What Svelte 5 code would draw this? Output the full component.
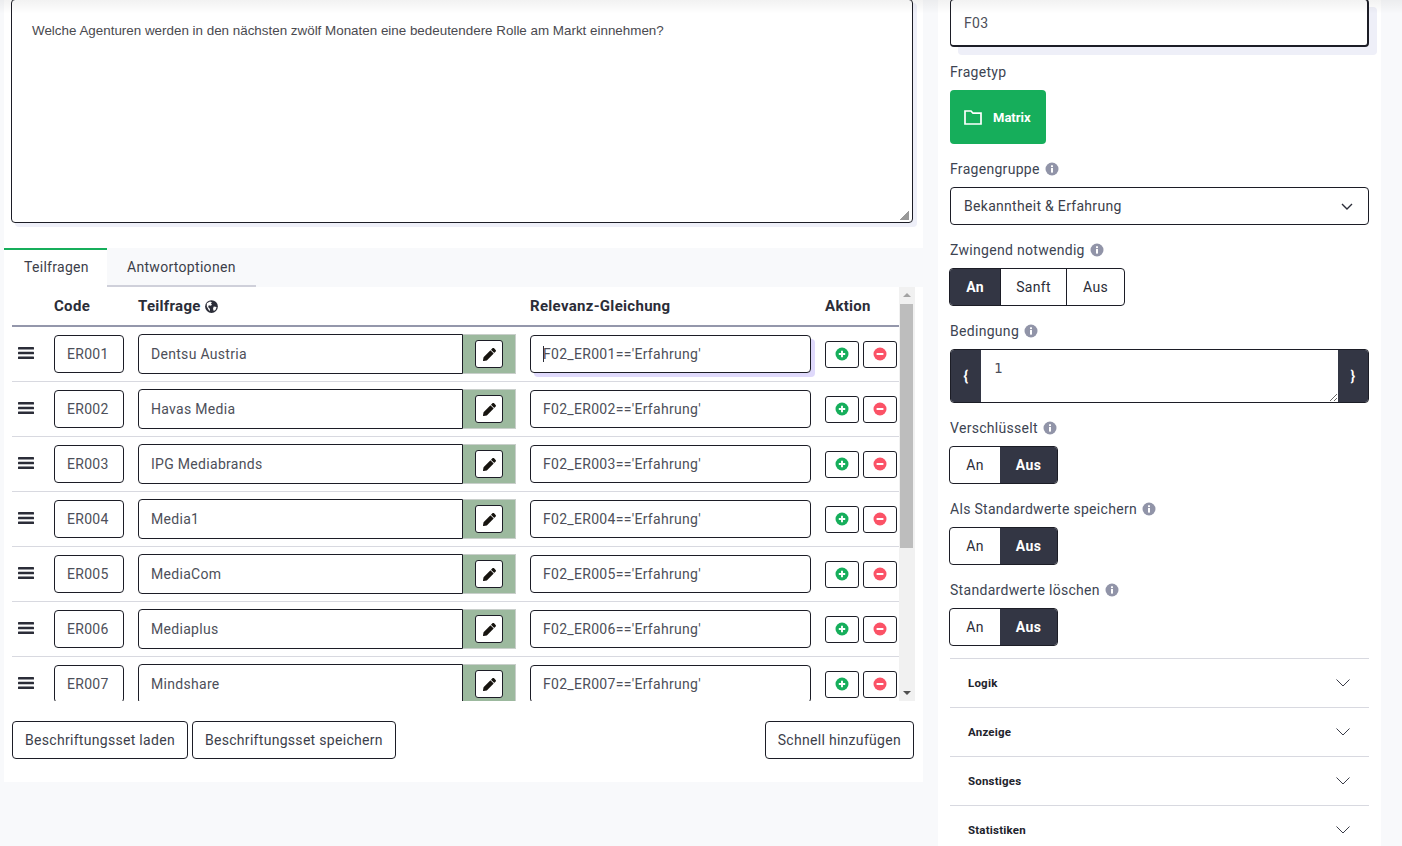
<script>
  const rows = [
    { code: 'ER001', name: 'Dentsu Austria' },
    { code: 'ER002', name: 'Havas Media' },
    { code: 'ER003', name: 'IPG Mediabrands' },
    { code: 'ER004', name: 'Media1' },
    { code: 'ER005', name: 'MediaCom' },
    { code: 'ER006', name: 'Mediaplus' },
    { code: 'ER007', name: 'Mindshare' }
  ];
  const toggles = ['Verschlüsselt', 'Als Standardwerte speichern', 'Standardwerte löschen'];
  const sections = ['Logik', 'Anzeige', 'Sonstiges', 'Statistiken'];
</script>

{#snippet info()}
  <svg class="info" viewBox="0 0 14 14" aria-hidden="true">
    <circle cx="7" cy="7" r="6.5" fill="#9194a8" />
    <rect x="6" y="6" width="2" height="4.6" fill="#fff" />
    <rect x="6" y="3.3" width="2" height="1.8" fill="#fff" />
  </svg>
{/snippet}

<div class="page">
  <div class="topshade"></div>

  <main class="left">
    <section class="editor-wrap">
      <div class="editor">
        Welche Agenturen werden in den nächsten zwölf Monaten eine bedeutendere Rolle am Markt einnehmen?
        <span class="grip"></span>
      </div>
    </section>

    <nav class="tabs">
      <span class="tab active">Teilfragen</span>
      <span class="tab">Antwortoptionen</span>
    </nav>

    <section class="content">
      <div class="tablebox">
        <div class="scroller">
          <div class="row head">
            <span></span>
            <span>Code</span>
            <span class="globe-cell">Teilfrage
              <svg class="globe" viewBox="0 0 16 16" aria-hidden="true">
                <circle cx="8" cy="8" r="6.8" fill="#2b2d38" />
                <path d="M3 4.6 6.4 2.6 8.4 3.4 7.4 5 8.6 6.2 7 7.2 5.2 6.6 4.4 8.6 6.4 10.6 6 13 4.6 11 3 8z" fill="#fff" />
                <path d="M10.4 8 13.4 8.4 12.4 11.4 10.4 12.8 9.6 10.4z" fill="#fff" />
              </svg>
            </span>
            <span>Relevanz-Gleichung</span>
            <span>Aktion</span>
          </div>

          {#each rows as row, i}
            <div class="row">
              <svg class="bars" viewBox="0 0 16 14" aria-hidden="true">
                <rect y="1" width="16" height="2.6" rx=".6" />
                <rect y="5.7" width="16" height="2.6" rx=".6" />
                <rect y="10.4" width="16" height="2.6" rx=".6" />
              </svg>
              <input class="field code" value={row.code} readonly />
              <div class="namegroup">
                <input class="field name" value={row.name} readonly />
                <div class="append">
                  <button class="pencil" aria-label="Bearbeiten">
                    <svg viewBox="0 0 512 512" aria-hidden="true">
                      <path d="M497.9 142.1l-46.1 46.1c-4.7 4.7-12.3 4.7-17 0l-111-111c-4.7-4.7-4.7-12.3 0-17l46.1-46.1c18.7-18.7 49.1-18.7 67.9 0l60.1 60.1c18.8 18.7 18.8 49.1 0 67.9zM284.2 99.8L21.6 362.4.4 483.9c-2.9 16.4 11.4 30.6 27.8 27.8l121.5-21.3 262.6-262.6c4.7-4.7 4.7-12.3 0-17l-111-111c-4.8-4.7-12.4-4.7-17.1 0z" />
                    </svg>
                  </button>
                </div>
              </div>
              <div class="relwrap">
                <input class="field rel" class:focus={i === 0} value="F02_{row.code}=='Erfahrung'" readonly />
                {#if i === 0}<span class="caret"></span>{/if}
              </div>
              <div class="actions">
                <button class="act" aria-label="Hinzufügen">
                  <svg viewBox="0 0 14 14" aria-hidden="true">
                    <circle cx="7" cy="7" r="6.5" fill="#16ae5b" />
                    <path d="M7 3.8v6.4M3.8 7h6.4" stroke="#fff" stroke-width="1.9" />
                  </svg>
                </button>
                <button class="act" aria-label="Löschen">
                  <svg viewBox="0 0 14 14" aria-hidden="true">
                    <circle cx="7" cy="7" r="6.5" fill="#fb5266" />
                    <path d="M3.6 7h6.8" stroke="#fff" stroke-width="2" />
                  </svg>
                </button>
              </div>
            </div>
          {/each}
        </div>

        <div class="scrollbar">
          <span class="arrow up"></span>
          <span class="thumb"></span>
          <span class="arrow down"></span>
        </div>
      </div>

      <div class="footer">
        <button class="btn">Beschriftungsset laden</button>
        <button class="btn">Beschriftungsset speichern</button>
        <button class="btn quick">Schnell hinzufügen</button>
      </div>
    </section>
  </main>

  <aside class="right">
    <input class="titlecode" value="F03" readonly />

    <div class="label">Fragetyp</div>
    <button class="matrix">
      <svg viewBox="0 0 18 16" aria-hidden="true">
        <path d="M1 2h6l2 2.2h8V15H1z" fill="none" stroke="#fff" stroke-width="1.7" />
      </svg>
      Matrix
    </button>

    <div class="label">Fragengruppe {@render info()}</div>
    <div class="select">
      Bekanntheit &amp; Erfahrung
      <svg viewBox="0 0 12 7" aria-hidden="true">
        <path d="M1 1l5 5 5-5" fill="none" stroke="#2b2d38" stroke-width="1.4" />
      </svg>
    </div>

    <div class="label">Zwingend notwendig {@render info()}</div>
    <div class="group">
      <span class="on an">An</span>
      <span class="sanft">Sanft</span>
      <span class="aus">Aus</span>
    </div>

    <div class="label">Bedingung {@render info()}</div>
    <div class="cond">
      <span class="brace">{'{'}</span>
      <textarea class="condtext" readonly>1</textarea>
      <span class="brace">{'}'}</span>
    </div>

    {#each toggles as t}
      <div class="label">{t} {@render info()}</div>
      <div class="group">
        <span class="an">An</span>
        <span class="on aus">Aus</span>
      </div>
    {/each}

    <div class="accordion">
      {#each sections as s}
        <div class="acc-item">
          <span>{s}</span>
          <svg viewBox="0 0 14 8" aria-hidden="true">
            <path d="M.5.5 7 7 13.5.5" fill="none" stroke="#3a3c48" stroke-width="1" />
          </svg>
        </div>
      {/each}
    </div>
  </aside>
</div>

<style>
  :global(body) {
    background: #f8f9fb;
    overflow: hidden;
  }

  .page {
    position: relative;
    display: flex;
    height: 846px;
    overflow: hidden;
    font-family: Roboto, "Noto Sans", sans-serif;
    font-size: 14px;
    letter-spacing: 0.3px;
    color: #2b2d38;
  }

  .topshade {
    position: absolute;
    top: 0;
    left: 0;
    right: 0;
    height: 14px;
    background: linear-gradient(rgba(0, 0, 0, 0.05), rgba(0, 0, 0, 0));
    z-index: 3;
  }

  .left {
    width: 919px;
    margin-left: 4px;
    margin-right: 15px;
    flex: none;
  }

  .editor-wrap {
    background: #fff;
    height: 249px;
    padding: 0 10px 0 7px;
  }

  .editor {
    position: relative;
    box-sizing: border-box;
    height: 224px;
    margin-top: -1px;
    padding: 23px 20px 0;
    border: 1px solid #1c1d26;
    border-radius: 4px;
    box-shadow: 4px 4px 0 #eeeff8;
    background: #fff;
    font-family: "Liberation Sans", Arial, sans-serif;
    font-size: 13.4px;
    letter-spacing: 0;
    line-height: 16px;
    color: #4a4a4f;
  }

  .grip {
    position: absolute;
    right: 3px;
    bottom: 2px;
    width: 10px;
    height: 10px;
    background: linear-gradient(135deg, transparent 50%, #9a9a9a 50%);
  }

  .tabs {
    display: flex;
    height: 39px;
  }

  .tab {
    box-sizing: border-box;
    width: 149px;
    padding: 11px 20px 0;
    border-bottom: 2px solid #cfd0da;
    color: #3c3e4a;
  }

  .tab.active {
    width: 103px;
    background: #fff;
    border-top: 2px solid #16ae5b;
    border-bottom: 0;
    padding-top: 9px;
  }

  .content {
    background: #fff;
    padding: 0 8px 23px;
    height: 495px;
    box-sizing: border-box;
  }

  .tablebox {
    display: flex;
    height: 414px;
    width: 903px;
  }

  .scroller {
    width: 887px;
    height: 414px;
    overflow: hidden;
  }

  .row {
    display: grid;
    grid-template-columns: 42px 84px 392px 295px 74px;
    align-items: center;
    height: 54px;
    border-bottom: 1px solid #d8d9e0;
    box-sizing: content-box;
  }

  .row.head {
    height: 38px;
    border-bottom: 2px solid #9497ab;
    font-weight: 700;
    font-size: 15px;
    color: #2b2d38;
  }

  .globe-cell {
    display: flex;
    align-items: center;
    gap: 3px;
  }

  .globe {
    width: 15px;
    height: 15px;
  }

  .bars {
    width: 16px;
    height: 14px;
    margin: 0 0 3px 6px;
    fill: #2b2d38;
  }

  .field {
    box-sizing: border-box;
    font: inherit;
    letter-spacing: inherit;
    color: #4d4f59;
    border: 1px solid #1c1d26;
    border-radius: 4px;
    background: #fff;
    outline: none;
    padding: 0 12px;
    height: 38px;
    display: block;
  }

  .code {
    width: 70px;
  }

  .namegroup {
    display: flex;
    width: 378px;
    height: 40px;
  }

  .name {
    width: 325px;
    height: 40px;
    border-radius: 4px 0 0 4px;
  }

  .append {
    display: flex;
    align-items: center;
    box-sizing: border-box;
    width: 53px;
    padding-left: 12px;
    background: #9cb99e;
    border: 1px solid #c9cfcb;
    border-left: 0;
  }

  .pencil {
    display: flex;
    align-items: center;
    justify-content: center;
    box-sizing: border-box;
    width: 28px;
    height: 28px;
    padding: 0;
    background: #fff;
    border: 1px solid #1c1d26;
    border-radius: 3px;
  }

  .pencil svg {
    width: 13px;
    height: 13px;
    fill: #17140f;
  }

  .relwrap {
    position: relative;
    width: 281px;
  }

  .rel {
    width: 281px;
  }

  .rel.focus {
    box-shadow: 4px 4px 0 #dfd9fb;
  }

  .caret {
    position: absolute;
    left: 13px;
    top: 11px;
    width: 1px;
    height: 16px;
    background: #2b2d38;
  }

  .actions {
    display: flex;
    gap: 4px;
  }

  .act {
    display: flex;
    align-items: center;
    justify-content: center;
    box-sizing: border-box;
    width: 34px;
    height: 27px;
    padding: 0;
    background: #fff;
    border: 1px solid #1c1d26;
    border-radius: 3px;
  }

  .act svg {
    width: 14px;
    height: 14px;
  }

  .scrollbar {
    position: relative;
    width: 16px;
    background: #f1f1f1;
  }

  .thumb {
    display: block;
    width: 13px;
    height: 244px;
    margin: 17px 0 0 1px;
    background: #bdbdbd;
  }

  .arrow {
    position: absolute;
    left: 4px;
    width: 0;
    height: 0;
    border-left: 4px solid transparent;
    border-right: 4px solid transparent;
  }

  .arrow.up {
    top: 6px;
    border-bottom: 4px solid #a3a3a3;
  }

  .arrow.down {
    bottom: 6px;
    border-top: 4px solid #505050;
  }

  .footer {
    display: flex;
    gap: 4px;
    width: 902px;
    margin-top: 20px;
  }

  .btn {
    box-sizing: border-box;
    height: 38px;
    padding: 0 12px;
    font: inherit;
    letter-spacing: inherit;
    color: #3c3e4a;
    background: #fff;
    border: 1px solid #1c1d26;
    border-radius: 4px;
  }

  .quick {
    margin-left: auto;
  }

  .right {
    box-sizing: border-box;
    width: 443px;
    flex: none;
    background: #fff;
    padding: 0 12px;
    height: 846px;
    overflow: hidden;
  }

  .titlecode {
    box-sizing: border-box;
    display: block;
    width: 419px;
    height: 48px;
    margin-top: -1px;
    margin-bottom: 15px;
    padding: 0 13px;
    font: inherit;
    letter-spacing: inherit;
    color: #4d4f59;
    background: #fff;
    border: 1px solid #1c1d26;
    border-bottom-width: 2px;
    border-right-width: 2px;
    border-radius: 4px;
    outline: none;
    box-shadow: 8px 8px 0 #eeeff8;
  }

  .label {
    display: flex;
    align-items: center;
    gap: 5px;
    height: 20px;
    margin-bottom: 8px;
    color: #3d4452;
  }

  .info {
    width: 14px;
    height: 14px;
    margin-left: 0;
  }

  .matrix {
    display: flex;
    align-items: center;
    gap: 11px;
    box-sizing: border-box;
    width: 96px;
    height: 54px;
    padding: 0 0 0 14px;
    margin-bottom: 15px;
    background: #16ae5b;
    border: 0;
    border-radius: 4px;
    color: #fff;
    font: inherit;
    font-weight: 700;
    font-size: 13px;
    letter-spacing: 0;
  }

  .matrix svg {
    width: 18px;
    height: 16px;
  }

  .select {
    display: flex;
    align-items: center;
    justify-content: space-between;
    box-sizing: border-box;
    height: 38px;
    padding: 0 15px 0 13px;
    margin-bottom: 15px;
    border: 1px solid #1c1d26;
    border-radius: 4px;
    color: #3c3e4a;
  }

  .select svg {
    width: 12px;
    height: 7px;
  }

  .group {
    display: flex;
    width: fit-content;
    height: 38px;
    margin: 0 0 15px -1px;
    box-sizing: border-box;
    border: 1px solid #1c1d26;
    border-radius: 4px;
    overflow: hidden;
  }

  .group span {
    display: flex;
    align-items: center;
    justify-content: center;
    box-sizing: border-box;
    color: #2b2d38;
  }

  .group .an {
    width: 50px;
  }

  .group .sanft {
    width: 67px;
    border-left: 1px solid #1c1d26;
    border-right: 1px solid #1c1d26;
  }

  .group .aus {
    width: 57px;
  }

  .group .on {
    background: #333644;
    color: #fff;
    font-weight: 700;
  }

  .cond {
    display: flex;
    height: 54px;
    margin-bottom: 15px;
    box-sizing: border-box;
    border: 1px solid #1c1d26;
    border-radius: 4px;
    overflow: hidden;
  }

  .brace {
    display: flex;
    align-items: center;
    justify-content: center;
    width: 30px;
    flex: none;
    background: #333644;
    color: #fff;
    font-weight: 700;
  }

  .condtext {
    flex: 1;
    min-width: 0;
    box-sizing: border-box;
    padding: 8px 13px;
    border: 0;
    outline: none;
    resize: both;
    font-family: "DejaVu Sans Mono", monospace;
    font-size: 14px;
    line-height: 20px;
    color: #4d4f59;
    letter-spacing: 0;
  }

  .accordion {
    margin-top: -3px;
  }

  .acc-item {
    display: flex;
    align-items: center;
    justify-content: space-between;
    box-sizing: border-box;
    height: 49px;
    padding: 0 19px 0 18px;
    border-top: 1px solid #d8d9e0;
    font-size: 11.5px;
    font-weight: 700;
    letter-spacing: 0.2px;
    color: #22232c;
  }

  .acc-item svg {
    width: 14px;
    height: 8px;
  }
</style>
